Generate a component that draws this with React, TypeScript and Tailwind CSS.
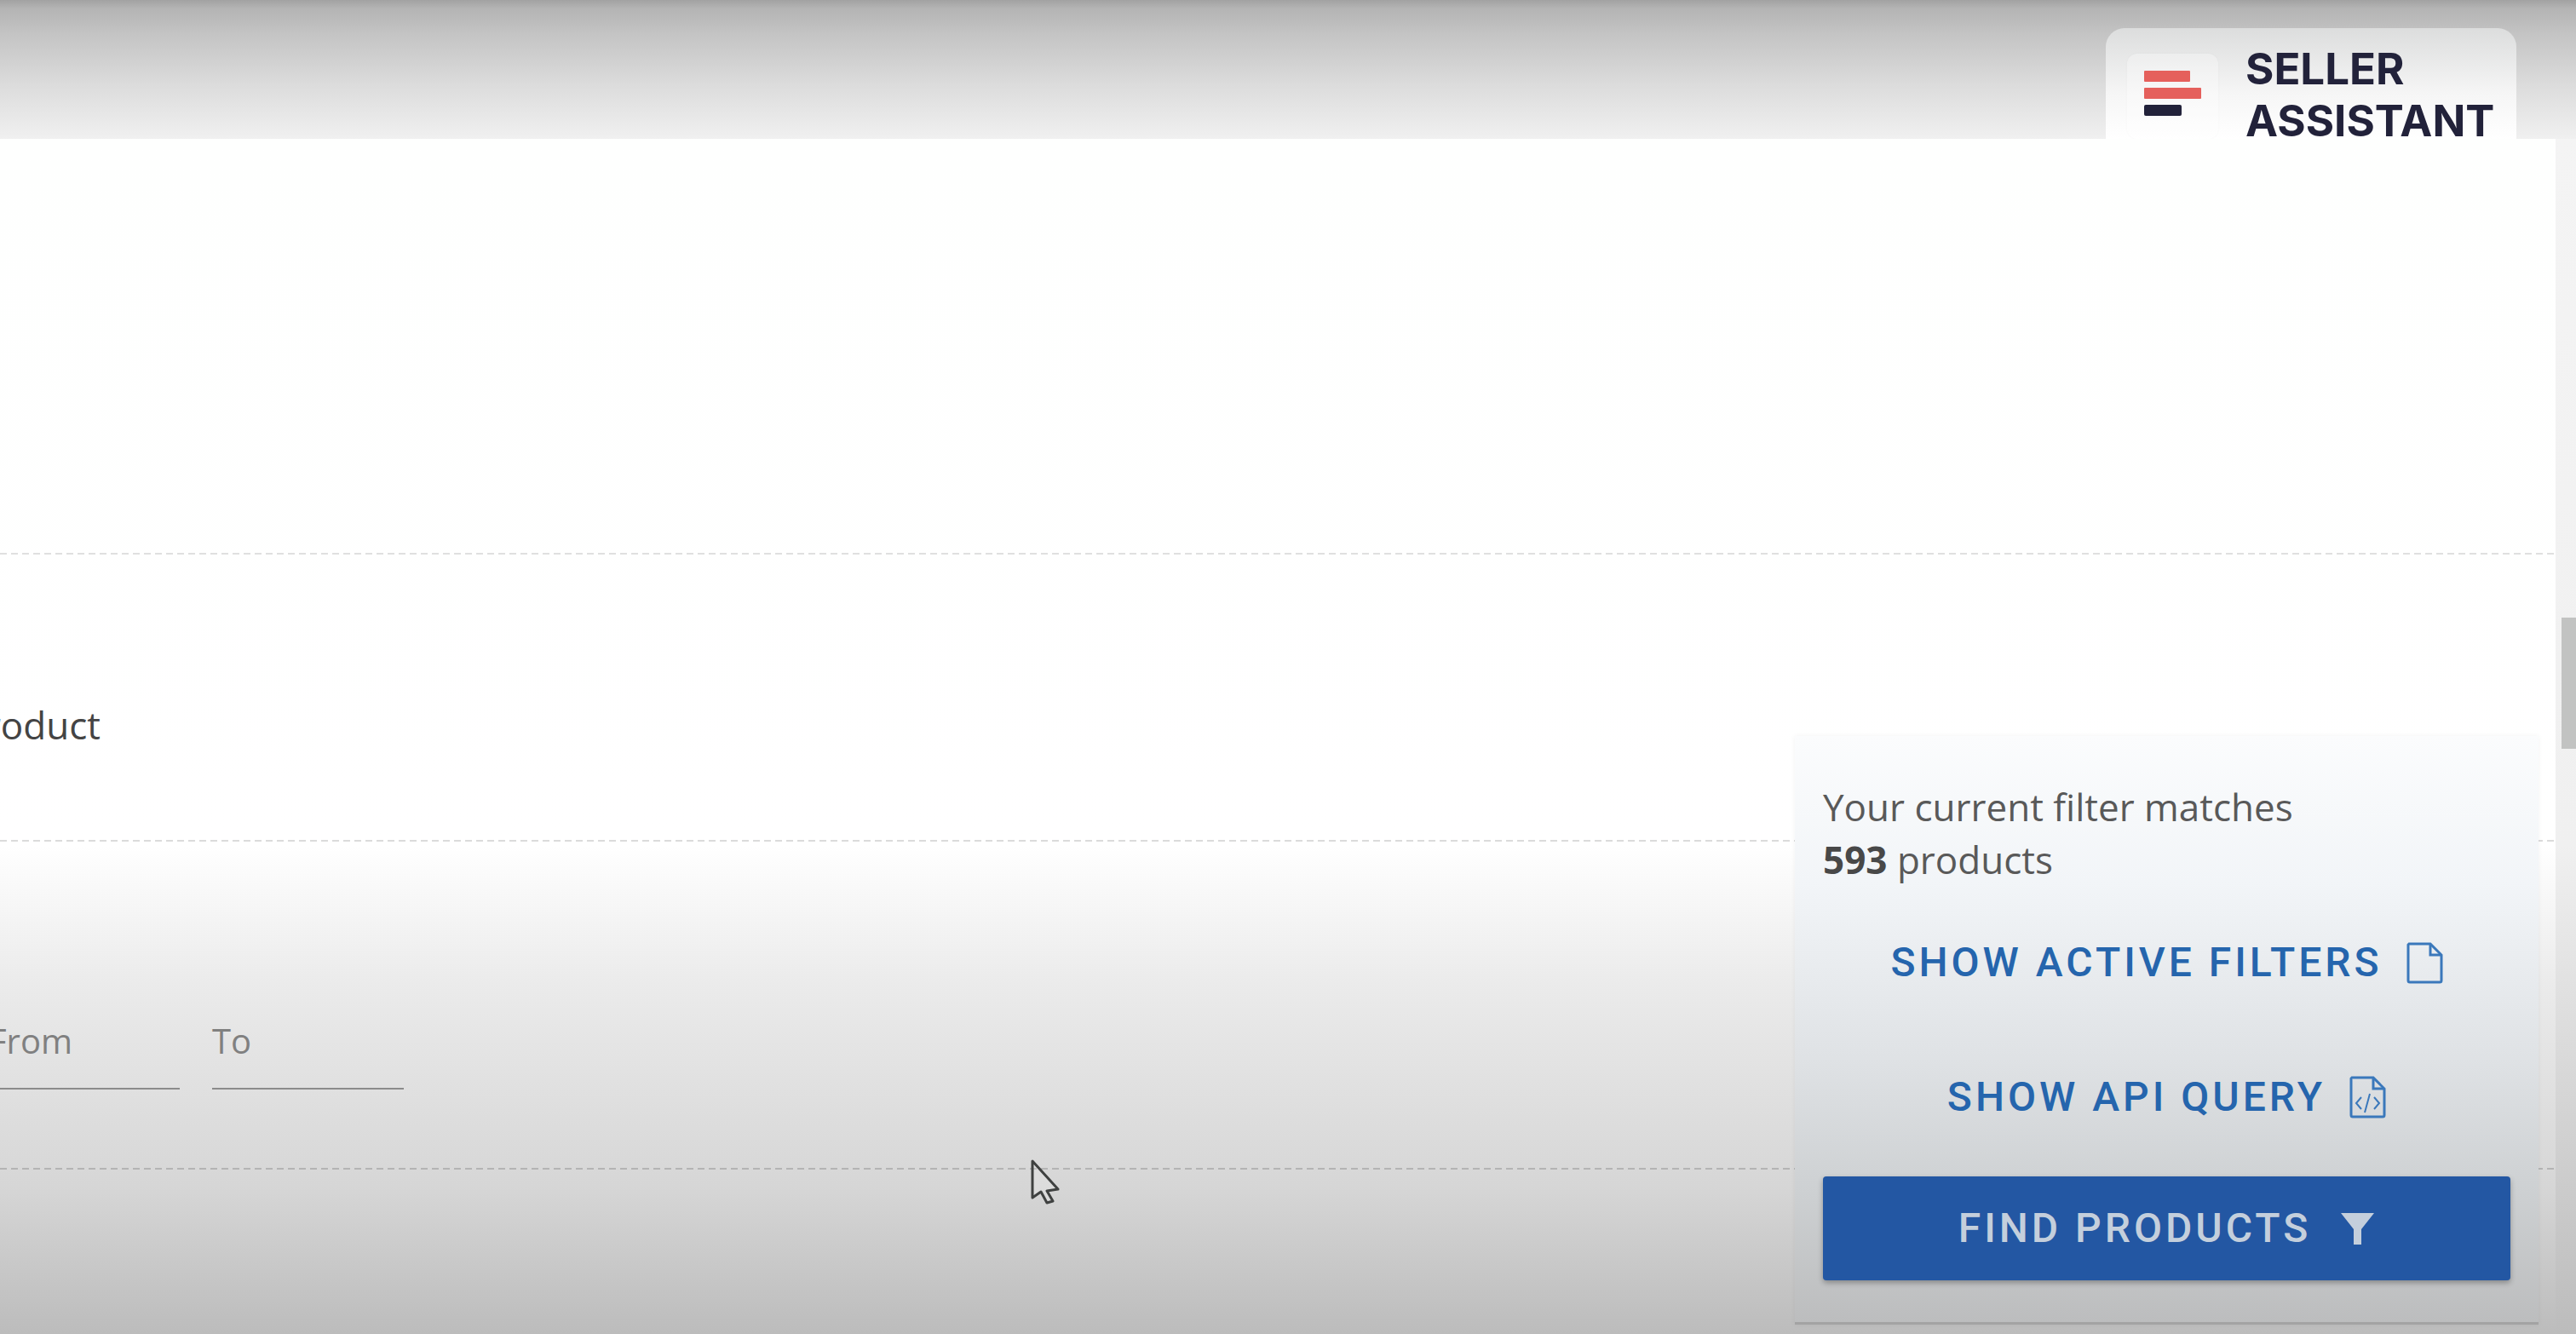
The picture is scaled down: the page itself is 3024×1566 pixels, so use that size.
function Dashes({ tone }: { tone: string }) {
  return <div className={`h-[2px] shrink-0 ${tone}`} />;
}

export default function App() {
  return (
    <div className="flex flex-col w-[3024px] h-[1566px] overflow-hidden bg-white font-['Open_Sans',sans-serif]">
      <header className="flex justify-end shrink-0 h-[163px] pr-[70px] pt-[33px] bg-[linear-gradient(to_bottom,#a2a2a2_0px,#b4b4b4_10px,#c4c4c4_40px,#dcdcdc_100px,#f0f0f0_163px)]">
        <div className="flex items-start w-[482px] h-[130px] pl-[25px] pt-[30px] gap-[32px] rounded-t-[22px] bg-[linear-gradient(to_bottom,#dcdddd,#f6f6f6_60%,#ffffff)]">
          <div className="flex items-start justify-start w-[107px] h-[100px] shrink-0 pl-[20px] pt-[20px] rounded-[12px] bg-white/30 shadow-[0_0_3px_rgba(0,0,0,0.03)]">
            <svg width="67" height="53" viewBox="0 0 67 53" className="block">
              <rect x="0" y="0" width="54" height="13" rx="1" fill="#e5605c" />
              <rect x="0" y="20" width="67" height="13" rx="1" fill="#e5605c" />
              <rect x="0" y="40" width="44" height="13" rx="2" fill="#22223a" />
            </svg>
          </div>
          <div className="font-['Inter',sans-serif] font-bold text-[51px] leading-[61px] text-[#22223a] mt-[-13px]">
            <div>SELLER</div>
            <div>ASSISTANT</div>
          </div>
        </div>
      </header>

      <main className="flex flex-1 min-h-0">
        <div className="relative flex flex-col w-[3000px] bg-[linear-gradient(to_bottom,#fefffe_0px,#ffffff_830px,#ebebeb_990px,#d6d6d6_1230px,#bcbcbc_1403px)]">
          <div className="h-[486px] shrink-0" />
          <Dashes tone="bg-[repeating-linear-gradient(to_right,rgba(0,0,0,0.12)_0px,rgba(0,0,0,0.12)_8px,transparent_8px,transparent_13px)]" />
          <div className="h-[335px] shrink-0 pt-[170px]">
            <div className="flex justify-end w-[118px] overflow-hidden">
              <span className="shrink-0 text-[44px] leading-[60px] text-[#444444]">Product</span>
            </div>
          </div>
          <Dashes tone="bg-[repeating-linear-gradient(to_right,rgba(0,0,0,0.14)_0px,rgba(0,0,0,0.14)_8px,transparent_8px,transparent_13px)]" />
          <div className="h-[383px] shrink-0 flex items-start pt-[204px] gap-[38px]">
            <div className="flex justify-end w-[211px] h-[87px] overflow-hidden border-b-[2px] border-[#8b8b8b]">
              <span className="shrink-0 w-[211px] flex justify-end pr-[126px] text-[40px] leading-[60px] text-[#808080]">From</span>
            </div>
            <div className="w-[225px] h-[87px] border-b-[2px] border-[#8b8b8b] text-[40px] leading-[60px] text-[#808080]">To</div>
          </div>
          <Dashes tone="bg-[repeating-linear-gradient(to_right,rgba(0,0,0,0.17)_0px,rgba(0,0,0,0.17)_8px,transparent_8px,transparent_13px)]" />

          <aside className="absolute right-[20px] bottom-[11px] flex flex-col w-[873px] h-[691px] px-[33px] pt-[52px] bg-[linear-gradient(to_bottom,#fbfcfd,#f2f5f8_25%,#dfe2e5_55%,#cdd0d2_78%,#bcbdbe)] border-b-[3px] border-[#a3a3a3] shadow-[0_0_6px_rgba(0,0,0,0.05)]">
            <p className="text-[44px] leading-[62px] text-[#595959] whitespace-nowrap">Your current filter matches</p>
            <p className="text-[44px] leading-[62px] text-[#595959]"><b className="font-bold text-[#484848]">593</b> products</p>
            <button className="flex items-center justify-center w-full h-[82px] shrink-0 mt-[49px] gap-[28px] font-['Roboto',sans-serif] font-medium text-[48px] tracking-[4px] text-[#2565ad]">
              SHOW ACTIVE FILTERS
              <svg width="43" height="49" viewBox="0 0 43 49" fill="none" stroke="#3a78bb" strokeWidth="3" className="block">
                <path d="M3 2h25l13 13v30a2 2 0 0 1-2 2H4a2 2 0 0 1-2-2V3z" />
                <path d="M28 2v13h13" />
              </svg>
            </button>
            <button className="flex items-center justify-center w-full h-[82px] shrink-0 mt-[76px] gap-[28px] font-['Roboto',sans-serif] font-medium text-[48px] tracking-[4px] text-[#2565ad]">
              SHOW API QUERY
              <svg width="43" height="50" viewBox="0 0 43 50" fill="none" stroke="#3a78bb" strokeWidth="3" className="block">
                <path d="M3 2h25l13 13v31a2 2 0 0 1-2 2H4a2 2 0 0 1-2-2V3z" />
                <path d="M28 2v13h13" />
                <path d="M14 25l-6 7 6 7M29 25l6 7-6 7M24 21l-6 22" strokeWidth="2" />
              </svg>
            </button>
            <button className="flex items-center justify-center w-full h-[122px] mt-[52px] gap-[34px] shrink-0 rounded-[4px] bg-[#2357a3] shadow-[0_3px_6px_rgba(0,0,0,0.3)] font-['Roboto',sans-serif] font-medium text-[48px] tracking-[4px] text-[#c4cfdc]">
              FIND PRODUCTS
              <svg width="41" height="39" viewBox="0 0 41 39" className="block">
                <path d="M1 1h39L25 20v18h-9V20z" fill="#c4cfdc" />
              </svg>
            </button>
          </aside>

          <svg width="36" height="54" viewBox="0 0 36 54" fill="none" className="absolute left-[1209px] top-[1198px]">
            <path d="M3 2v43l10-7 7 13 7-2-7-12 13-2z" fill="#ffffff" fillOpacity="0.15" stroke="#3f4140" strokeWidth="3" strokeLinejoin="round" />
          </svg>
        </div>

        <div className="w-[24px] pt-[562px] pl-[7px] bg-[linear-gradient(to_bottom,#f4f4f4,#f0f0f0_830px,#bcbcbc_1403px)]">
          <div className="h-[154px] bg-[#c2c3c2]" />
        </div>
      </main>
    </div>
  );
}
